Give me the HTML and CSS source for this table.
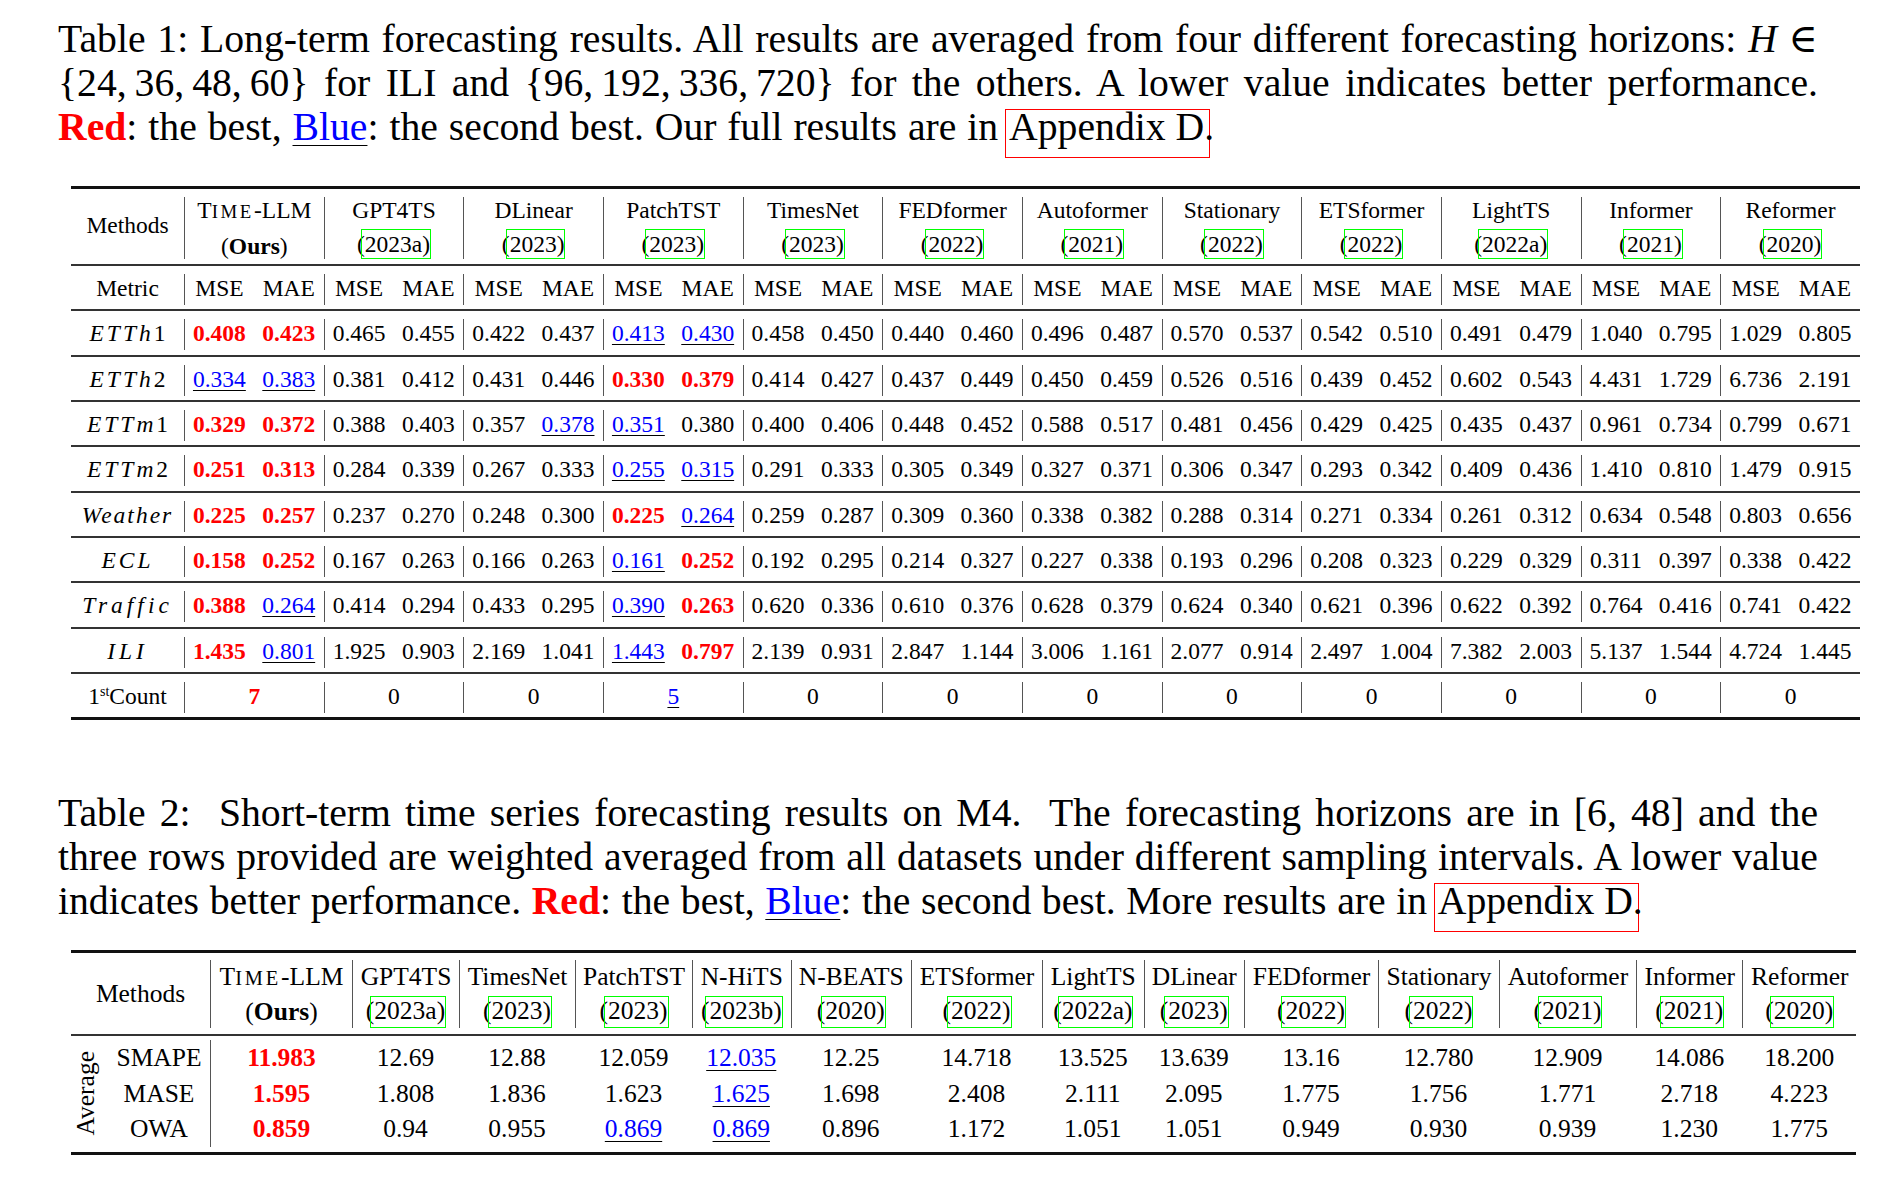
FILE: index.html
```html
<!DOCTYPE html>
<html>
<head>
<meta charset="utf-8">
<title>Time-LLM results</title>
<link rel="stylesheet" href="styles.css">
</head>
<body>
<div class="page">

<div class="caption cap1">
  <div class="cl">Table 1: Long-term forecasting results. All results are averaged from four different forecasting horizons: <i>H</i> ∈</div>
  <div class="cl"><span class="set">{24,&thinsp;36,&thinsp;48,&thinsp;60}</span> for ILI and <span class="set">{96,&thinsp;192,&thinsp;336,&thinsp;720}</span> for the others. A lower value indicates better performance.</div>
  <div class="cl last"><b class="red">Red</b>: the best, <span class="blue">Blue</span>: the second best. Our full results are in <span class="appx">Appendix D</span>.</div>
</div>

<div class="t1">
  <div class="row h">
    <div class="c lab"><span>Methods</span></div>
    <div class="c"><div class="two">T<span class="smc">IME</span>-LLM<br>(<b>Ours</b>)</div></div>
    <div class="c"><div class="two">GPT4TS<br>(<span class="cite">2023a)</span></div></div>
    <div class="c"><div class="two">DLinear<br>(<span class="cite">2023)</span></div></div>
    <div class="c"><div class="two">PatchTST<br>(<span class="cite">2023)</span></div></div>
    <div class="c"><div class="two">TimesNet<br>(<span class="cite">2023)</span></div></div>
    <div class="c"><div class="two">FEDformer<br>(<span class="cite">2022)</span></div></div>
    <div class="c"><div class="two">Autoformer<br>(<span class="cite">2021)</span></div></div>
    <div class="c"><div class="two">Stationary<br>(<span class="cite">2022)</span></div></div>
    <div class="c"><div class="two">ETSformer<br>(<span class="cite">2022)</span></div></div>
    <div class="c"><div class="two">LightTS<br>(<span class="cite">2022a)</span></div></div>
    <div class="c"><div class="two">Informer<br>(<span class="cite">2021)</span></div></div>
    <div class="c"><div class="two">Reformer<br>(<span class="cite">2020)</span></div></div>
  </div>

  <div class="row d">
    <div class="c">Metric</div>
    <div class="c">MSE</div><div class="c">MAE</div>
    <div class="c">MSE</div><div class="c">MAE</div>
    <div class="c">MSE</div><div class="c">MAE</div>
    <div class="c">MSE</div><div class="c">MAE</div>
    <div class="c">MSE</div><div class="c">MAE</div>
    <div class="c">MSE</div><div class="c">MAE</div>
    <div class="c">MSE</div><div class="c">MAE</div>
    <div class="c">MSE</div><div class="c">MAE</div>
    <div class="c">MSE</div><div class="c">MAE</div>
    <div class="c">MSE</div><div class="c">MAE</div>
    <div class="c">MSE</div><div class="c">MAE</div>
    <div class="c">MSE</div><div class="c">MAE</div>
  </div>

  <div class="row d">
    <div class="c"><span class="m m3">ETTh</span>1</div>
    <div class="c"><span class="r">0.408</span></div><div class="c"><span class="r">0.423</span></div>
    <div class="c">0.465</div><div class="c">0.455</div>
    <div class="c">0.422</div><div class="c">0.437</div>
    <div class="c"><span class="b">0.413</span></div><div class="c"><span class="b">0.430</span></div>
    <div class="c">0.458</div><div class="c">0.450</div>
    <div class="c">0.440</div><div class="c">0.460</div>
    <div class="c">0.496</div><div class="c">0.487</div>
    <div class="c">0.570</div><div class="c">0.537</div>
    <div class="c">0.542</div><div class="c">0.510</div>
    <div class="c">0.491</div><div class="c">0.479</div>
    <div class="c">1.040</div><div class="c">0.795</div>
    <div class="c">1.029</div><div class="c">0.805</div>
  </div>

  <div class="row d">
    <div class="c"><span class="m m3">ETTh</span>2</div>
    <div class="c"><span class="b">0.334</span></div><div class="c"><span class="b">0.383</span></div>
    <div class="c">0.381</div><div class="c">0.412</div>
    <div class="c">0.431</div><div class="c">0.446</div>
    <div class="c"><span class="r">0.330</span></div><div class="c"><span class="r">0.379</span></div>
    <div class="c">0.414</div><div class="c">0.427</div>
    <div class="c">0.437</div><div class="c">0.449</div>
    <div class="c">0.450</div><div class="c">0.459</div>
    <div class="c">0.526</div><div class="c">0.516</div>
    <div class="c">0.439</div><div class="c">0.452</div>
    <div class="c">0.602</div><div class="c">0.543</div>
    <div class="c">4.431</div><div class="c">1.729</div>
    <div class="c">6.736</div><div class="c">2.191</div>
  </div>

  <div class="row d">
    <div class="c"><span class="m m3">ETTm</span>1</div>
    <div class="c"><span class="r">0.329</span></div><div class="c"><span class="r">0.372</span></div>
    <div class="c">0.388</div><div class="c">0.403</div>
    <div class="c">0.357</div><div class="c"><span class="b">0.378</span></div>
    <div class="c"><span class="b">0.351</span></div><div class="c">0.380</div>
    <div class="c">0.400</div><div class="c">0.406</div>
    <div class="c">0.448</div><div class="c">0.452</div>
    <div class="c">0.588</div><div class="c">0.517</div>
    <div class="c">0.481</div><div class="c">0.456</div>
    <div class="c">0.429</div><div class="c">0.425</div>
    <div class="c">0.435</div><div class="c">0.437</div>
    <div class="c">0.961</div><div class="c">0.734</div>
    <div class="c">0.799</div><div class="c">0.671</div>
  </div>

  <div class="row d">
    <div class="c"><span class="m m3">ETTm</span>2</div>
    <div class="c"><span class="r">0.251</span></div><div class="c"><span class="r">0.313</span></div>
    <div class="c">0.284</div><div class="c">0.339</div>
    <div class="c">0.267</div><div class="c">0.333</div>
    <div class="c"><span class="b">0.255</span></div><div class="c"><span class="b">0.315</span></div>
    <div class="c">0.291</div><div class="c">0.333</div>
    <div class="c">0.305</div><div class="c">0.349</div>
    <div class="c">0.327</div><div class="c">0.371</div>
    <div class="c">0.306</div><div class="c">0.347</div>
    <div class="c">0.293</div><div class="c">0.342</div>
    <div class="c">0.409</div><div class="c">0.436</div>
    <div class="c">1.410</div><div class="c">0.810</div>
    <div class="c">1.479</div><div class="c">0.915</div>
  </div>

  <div class="row d">
    <div class="c"><span class="m m2">Weather</span></div>
    <div class="c"><span class="r">0.225</span></div><div class="c"><span class="r">0.257</span></div>
    <div class="c">0.237</div><div class="c">0.270</div>
    <div class="c">0.248</div><div class="c">0.300</div>
    <div class="c"><span class="r">0.225</span></div><div class="c"><span class="b">0.264</span></div>
    <div class="c">0.259</div><div class="c">0.287</div>
    <div class="c">0.309</div><div class="c">0.360</div>
    <div class="c">0.338</div><div class="c">0.382</div>
    <div class="c">0.288</div><div class="c">0.314</div>
    <div class="c">0.271</div><div class="c">0.334</div>
    <div class="c">0.261</div><div class="c">0.312</div>
    <div class="c">0.634</div><div class="c">0.548</div>
    <div class="c">0.803</div><div class="c">0.656</div>
  </div>

  <div class="row d">
    <div class="c"><span class="m m3">ECL</span></div>
    <div class="c"><span class="r">0.158</span></div><div class="c"><span class="r">0.252</span></div>
    <div class="c">0.167</div><div class="c">0.263</div>
    <div class="c">0.166</div><div class="c">0.263</div>
    <div class="c"><span class="b">0.161</span></div><div class="c"><span class="r">0.252</span></div>
    <div class="c">0.192</div><div class="c">0.295</div>
    <div class="c">0.214</div><div class="c">0.327</div>
    <div class="c">0.227</div><div class="c">0.338</div>
    <div class="c">0.193</div><div class="c">0.296</div>
    <div class="c">0.208</div><div class="c">0.323</div>
    <div class="c">0.229</div><div class="c">0.329</div>
    <div class="c">0.311</div><div class="c">0.397</div>
    <div class="c">0.338</div><div class="c">0.422</div>
  </div>

  <div class="row d">
    <div class="c"><span class="m m4">Traffic</span></div>
    <div class="c"><span class="r">0.388</span></div><div class="c"><span class="b">0.264</span></div>
    <div class="c">0.414</div><div class="c">0.294</div>
    <div class="c">0.433</div><div class="c">0.295</div>
    <div class="c"><span class="b">0.390</span></div><div class="c"><span class="r">0.263</span></div>
    <div class="c">0.620</div><div class="c">0.336</div>
    <div class="c">0.610</div><div class="c">0.376</div>
    <div class="c">0.628</div><div class="c">0.379</div>
    <div class="c">0.624</div><div class="c">0.340</div>
    <div class="c">0.621</div><div class="c">0.396</div>
    <div class="c">0.622</div><div class="c">0.392</div>
    <div class="c">0.764</div><div class="c">0.416</div>
    <div class="c">0.741</div><div class="c">0.422</div>
  </div>

  <div class="row d">
    <div class="c"><span class="m m4">ILI</span></div>
    <div class="c"><span class="r">1.435</span></div><div class="c"><span class="b">0.801</span></div>
    <div class="c">1.925</div><div class="c">0.903</div>
    <div class="c">2.169</div><div class="c">1.041</div>
    <div class="c"><span class="b">1.443</span></div><div class="c"><span class="r">0.797</span></div>
    <div class="c">2.139</div><div class="c">0.931</div>
    <div class="c">2.847</div><div class="c">1.144</div>
    <div class="c">3.006</div><div class="c">1.161</div>
    <div class="c">2.077</div><div class="c">0.914</div>
    <div class="c">2.497</div><div class="c">1.004</div>
    <div class="c">7.382</div><div class="c">2.003</div>
    <div class="c">5.137</div><div class="c">1.544</div>
    <div class="c">4.724</div><div class="c">1.445</div>
  </div>

  <div class="row d cnt">
    <div class="c">1<sup>st</sup>Count</div>
    <div class="c"><span class="r">7</span></div>
    <div class="c">0</div>
    <div class="c">0</div>
    <div class="c"><span class="b">5</span></div>
    <div class="c">0</div>
    <div class="c">0</div>
    <div class="c">0</div>
    <div class="c">0</div>
    <div class="c">0</div>
    <div class="c">0</div>
    <div class="c">0</div>
    <div class="c">0</div>
  </div>
</div>

<div class="caption cap2">
  <div class="cl">Table 2:&nbsp; Short-term time series forecasting results on M4.&nbsp; The forecasting horizons are in [6, 48] and the</div>
  <div class="cl">three rows provided are weighted averaged from all datasets under different sampling intervals. A lower value</div>
  <div class="cl last">indicates better performance. <b class="red">Red</b>: the best, <span class="blue">Blue</span>: the second best. More results are in <span class="appx">Appendix D</span>.</div>
</div>

<div class="t2">
  <div class="row h2">
    <div class="c meth">Methods</div>
    <div class="c">T<span class="smc">IME</span>-LLM<br>(<b>Ours</b>)</div>
    <div class="c">GPT4TS<br>(<span class="cite">2023a)</span></div>
    <div class="c">TimesNet<br>(<span class="cite">2023)</span></div>
    <div class="c">PatchTST<br>(<span class="cite">2023)</span></div>
    <div class="c">N-HiTS<br>(<span class="cite">2023b)</span></div>
    <div class="c">N-BEATS<br>(<span class="cite">2020)</span></div>
    <div class="c">ETSformer<br>(<span class="cite">2022)</span></div>
    <div class="c">LightTS<br>(<span class="cite">2022a)</span></div>
    <div class="c">DLinear<br>(<span class="cite">2023)</span></div>
    <div class="c">FEDformer<br>(<span class="cite">2022)</span></div>
    <div class="c">Stationary<br>(<span class="cite">2022)</span></div>
    <div class="c">Autoformer<br>(<span class="cite">2021)</span></div>
    <div class="c">Informer<br>(<span class="cite">2021)</span></div>
    <div class="c">Reformer<br>(<span class="cite">2020)</span></div>
  </div>

  <div class="row d2">
    <div class="avg">Average</div>
    <div class="c">SMAPE</div>
    <div class="c v"><span class="r">11.983</span></div>
    <div class="c">12.69</div>
    <div class="c">12.88</div>
    <div class="c">12.059</div>
    <div class="c"><span class="b">12.035</span></div>
    <div class="c">12.25</div>
    <div class="c">14.718</div>
    <div class="c">13.525</div>
    <div class="c">13.639</div>
    <div class="c">13.16</div>
    <div class="c">12.780</div>
    <div class="c">12.909</div>
    <div class="c">14.086</div>
    <div class="c">18.200</div>

    <div class="c">MASE</div>
    <div class="c v"><span class="r">1.595</span></div>
    <div class="c">1.808</div>
    <div class="c">1.836</div>
    <div class="c">1.623</div>
    <div class="c"><span class="b">1.625</span></div>
    <div class="c">1.698</div>
    <div class="c">2.408</div>
    <div class="c">2.111</div>
    <div class="c">2.095</div>
    <div class="c">1.775</div>
    <div class="c">1.756</div>
    <div class="c">1.771</div>
    <div class="c">2.718</div>
    <div class="c">4.223</div>

    <div class="c">OWA</div>
    <div class="c v"><span class="r">0.859</span></div>
    <div class="c">0.94</div>
    <div class="c">0.955</div>
    <div class="c"><span class="b">0.869</span></div>
    <div class="c"><span class="b">0.869</span></div>
    <div class="c">0.896</div>
    <div class="c">1.172</div>
    <div class="c">1.051</div>
    <div class="c">1.051</div>
    <div class="c">0.949</div>
    <div class="c">0.930</div>
    <div class="c">0.939</div>
    <div class="c">1.230</div>
    <div class="c">1.775</div>
  </div>
</div>

</div>
</body>
</html>
```

FILE: styles.css
```css
* {
  box-sizing: border-box;
  margin: 0;
  padding: 0;
}

html,
body {
  background: #ffffff;
}

body {
  width: 1891px;
  height: 1184px;
  overflow: hidden;
  color: #000000;
  font-family: "Liberation Serif", "Times New Roman", "DejaVu Serif", serif;
}

.page {
  padding-top: 16.5px;
}

/* ---------- captions ---------- */
.caption {
  margin-left: 58px;
  width: 1760px;
  font-size: 39.7px;
  line-height: 44px;
}

.cl {
  text-align: justify;
  text-align-last: justify;
}

.cl.last {
  text-align: left;
  text-align-last: left;
}

.cap1 .cl.last {
  word-spacing: 1px;
}

.cap2 .cl.last {
  word-spacing: 0.7px;
}

.set {
  display: inline-block;
}

.red {
  color: #ff0000;
  font-weight: bold;
}

.blue {
  color: #0000ff;
  text-decoration: underline;
  text-decoration-color: #000000;
  text-decoration-thickness: 1px;
  text-underline-offset: 5px;
}

.appx {
  display: inline-block;
  line-height: 35px;
  padding: 0 5px 12px 3px;
  margin: 0 -6px -12px -4px;
  border: 1px solid #ff0000;
  word-spacing: 0;
}

.cap2 {
  margin-top: 71px;
}

/* ---------- shared table pieces ---------- */
.row {
  display: grid;
}

.row + .row {
  border-top: 2px solid #333333;
}

.c {
  text-align: center;
  white-space: nowrap;
}

.r {
  color: #ff0000;
  font-weight: bold;
}

.b {
  color: #0000ff;
  text-decoration: underline;
  text-decoration-color: #000000;
  text-decoration-thickness: 1px;
  text-underline-offset: 3px;
}

.smc {
  font-size: 0.8em;
  letter-spacing: 0.14em;
}

.cite {
  display: inline-block;
  line-height: 28px;
  border: 1px solid #00ff00;
  margin-left: -4px;
  padding-left: 3px;
}

.m {
  font-style: italic;
}

.m2 {
  letter-spacing: 2px;
}

.m3 {
  letter-spacing: 3px;
}

.m4 {
  letter-spacing: 4px;
}

sup {
  font-size: 0.6em;
  line-height: 0;
  vertical-align: 0.55em;
}

/* ---------- table 1 ---------- */
.t1 {
  margin: 37.5px 0 0 71px;
  width: 1789px;
  font-size: 23.5px;
  border-top: 3px solid #111111;
  border-bottom: 3px solid #111111;
}

.t1 .row {
  grid-template-columns: 113px repeat(24, 69.833px);
}

.t1 .h {
  padding: 8px 0 5px 0;
}

.t1 .h .c {
  height: 62px;
  line-height: 34px;
}

.t1 .h .c:not(:first-child) {
  grid-column: span 2;
  border-left: 1px solid #555555;
}

.two {
  margin-top: -4px;
}

.t1 .h .lab {
  display: flex;
  align-items: center;
  justify-content: center;
  padding-bottom: 6px;
}

.t1 .d {
  padding: 8px 0 4.35px 0;
}

.t1 .d .c {
  height: 31px;
  line-height: 28px;
}

.t1 .d .c:nth-child(even) {
  border-left: 1px solid #555555;
}

.t1 .cnt .c:not(:first-child) {
  grid-column: span 2;
  border-left: 1px solid #555555;
}

/* ---------- table 2 ---------- */
.t2 {
  margin: 27px 0 0 71px;
  width: 1785px;
  font-size: 25.5px;
  border-top: 3px solid #111111;
  border-bottom: 3px solid #111111;
}

.t2 .row {
  grid-template-columns: 37px 102px 142px 107px 116px 117px 98.5px 120.5px 131px 101.6px 100.4px 134px 121px 137px 106.5px 113.5px;
}

.t2 .h2 {
  padding: 6.5px 0 6px 0;
}

.t2 .h2 .c {
  height: 68px;
  line-height: 34px;
  border-left: 1px solid #555555;
}

.t2 .h2 .meth {
  grid-column: span 2;
  border-left: 0;
  display: flex;
  align-items: center;
  justify-content: center;
}

.t2 .cite {
  padding-bottom: 2px;
}

.t2 .b {
  text-underline-offset: 4px;
}

.t2 .d2 {
  padding: 4.5px 0 5px 0;
  grid-template-rows: repeat(3, 35.5px);
  line-height: 35.5px;
}

.avg {
  grid-column: 1;
  grid-row: 1 / span 3;
  writing-mode: vertical-rl;
  transform: rotate(180deg);
  text-align: center;
  line-height: 30px;
  font-size: 25.5px;
}

.v {
  border-left: 1px solid #555555;
}
```
